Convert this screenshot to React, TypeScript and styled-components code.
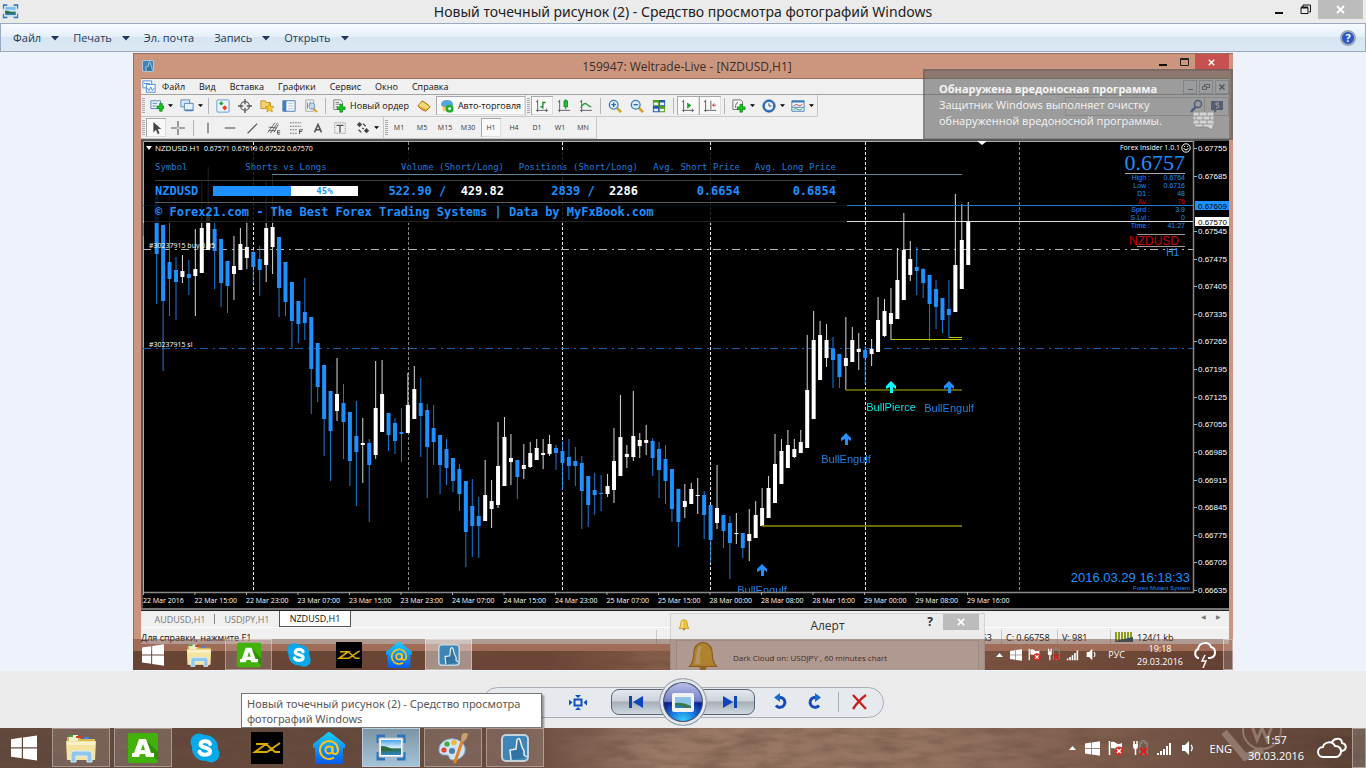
import React from 'react';
import styled, { createGlobalStyle, css } from 'styled-components';

const GlobalStyle = createGlobalStyle`
  * { box-sizing: border-box; }
  body { margin: 0; background: #eef3fa; font-family: "Open Sans", "Noto Sans", sans-serif; }
  button { font: inherit; color: inherit; border: 0; padding: 0; margin: 0; background: none; }
  svg { display: block; flex: none; }
`;

/* ---------- icons ---------- */

type IconProps = { size?: number };

const WinLogo = ({ size = 26 }: IconProps) => (
  <svg width={size} height={size} viewBox="0 0 26 26" fill="#fff">
    <path d="M0 4.2 10.8 2.6V12.3H0zM12 2.4 26 .4V12.3H12zM0 13.6H10.8V23.3L0 21.8zM12 13.6H26V25.6L12 23.5z" />
  </svg>
);

const FolderIcon = ({ size = 32 }: IconProps) => (
  <svg width={size} height={size} viewBox="0 0 32 32">
    <path d="M2 5h12l2 2h14v21H2z" fill="#d9b85a" />
    <path d="M4 3h9v6H4z" fill="#e9f3d0" />
    <path d="M4 3h4v2H4z" fill="#2fa62f" /><path d="M11 4h5v2h-5z" fill="#d8372a" /><path d="M19 5h5v2h-5z" fill="#3f86d6" />
    <path d="M1 9h30l-1 19H2z" fill="#f5e3a0" />
    <path d="M2 10h28v3H2z" fill="#fbf1c8" />
    <path d="M6 30v-8q0-3 3-3h15q3 0 3 3v8h-5v-6H11v6z" fill="#8fc6ea" stroke="#d9effb" />
  </svg>
);

const AIcon = ({ size = 32 }: IconProps) => (
  <svg width={size} height={size} viewBox="0 0 32 32">
    <rect x="1" y="1" width="30" height="30" rx="2" fill="#43b10c" />
    <path d="M26 24 31 29V20L19 8z" fill="#2f8f06" />
    <path fillRule="evenodd" d="M12 7h7l5 14h3v4h-8l-1-3h-5l-1 3H5v-4h2zM16 12l-2 6h4z" fill="#fff" />
  </svg>
);

const SkypeIcon = ({ size = 32 }: IconProps) => (
  <svg width={size} height={size} viewBox="0 0 32 32">
    <circle cx="16" cy="16" r="13" fill="#07a9ea" /><circle cx="10" cy="10" r="8.5" fill="#07a9ea" /><circle cx="22" cy="22" r="8.5" fill="#07a9ea" />
    <path d="M21 12C20 8.5 11.500 8 11.500 12.200c0 4.300 9.500 2.600 9.500 7 0 4.500-9 4.500-10.500.5" fill="none" stroke="#fff" strokeWidth="4" strokeLinecap="round" />
  </svg>
);

const ZxIcon = ({ size = 32 }: IconProps) => (
  <svg width={size} height={size} viewBox="0 0 32 32">
    <path d="M0 0h32v32H0z" fill="#000" />
    <path d="M5 12h10L4 20h12l13-9M15 12l9 8h5" fill="none" stroke="#d9a900" strokeWidth="2" />
  </svg>
);

const MailIcon = ({ size = 32 }: IconProps) => (
  <svg width={size} height={size} viewBox="0 0 32 32">
    <defs><linearGradient id="house" x2="0" y2="1"><stop stopColor="#16d0ff" /><stop offset="1" stopColor="#0a5be8" /></linearGradient></defs>
    <path d="M14 1q2-2 4 0l14 11v4h-2v14q0 2-2 2H4q-2 0-2-2V16H0v-4z" fill="url(#house)" />
    <circle cx="16" cy="18" r="3.500" fill="none" stroke="#ffc21a" strokeWidth="2" />
    <path d="M19.500 14v5.500q0 2.500 2.500 2.500c2.500 0 3-2 3-4a9 9 0 1 0-4 7.500" fill="none" stroke="#ffc21a" strokeWidth="2" />
  </svg>
);

const MtIcon = ({ size = 28 }: IconProps) => (
  <svg width={size} height={size} viewBox="0 0 28 28">
    <rect x="1" y="1" width="26" height="26" rx="4" fill="#3f86b8" stroke="#c3d2dc" strokeWidth="2" />
    <path d="M10 26 9 16l6-1 1-9q2-3 3 0l2 7 2 4v4l3 2" fill="#3273a3" stroke="#e8eef2" strokeWidth="1.500" />
  </svg>
);

const PhotoIcon = ({ size = 32 }: IconProps) => (
  <svg width={size} height={size} viewBox="0 0 32 32">
    <defs><linearGradient id="sky" x2="0" y2="1"><stop stopColor="#4aa4ea" /><stop offset=".5" stopColor="#d8eefa" /><stop offset=".6" stopColor="#2b6f4e" /><stop offset="1" stopColor="#2b86c6" /></linearGradient></defs>
    <path d="M3 11V4h7M22 4h7v7M29 20v7h-7M10 27H3v-7" fill="none" stroke="#2d74b8" strokeWidth="3" />
    <path d="M4 6h24v19H4z" fill="#fff" stroke="#a9bccb" /><path d="M6 8h20v15H6z" fill="url(#sky)" /><path d="M6 14q8 0 13 5H6z" fill="#2f6a3f" />
  </svg>
);

const PaintIcon = ({ size = 32 }: IconProps) => (
  <svg width={size} height={size} viewBox="0 0 32 32">
    <path d="M2 18C2 10 10 6 17 7s12 6 11 12-7 9-12 9-3-5-6-5-8 0-8-5z" fill="#cfe4f3" stroke="#8fb0cc" />
    <circle cx="7" cy="18" r="2.600" fill="#e04234" /><circle cx="10" cy="12" r="2.600" fill="#43a84a" /><circle cx="17" cy="10.500" r="2.600" fill="#f3b62c" /><circle cx="15" cy="19" r="3" fill="#4d7ea8" />
    <path d="M26 7 18 30" stroke="#e0812b" strokeWidth="3" strokeLinecap="round" /><path d="M24 8 25 2q4-2 6 0-1 6-5 8z" fill="#c9a070" />
  </svg>
);

const FlagIcon = ({ size = 16 }: IconProps) => (
  <svg width={size} height={size} viewBox="0 0 16 16">
    <path d="M1.500 1v14" stroke="#fff" strokeWidth="1.500" /><path d="M3 2q3-1 5 1t6 0v6q-4 1-6 0T3 8z" fill="#fff" />
    <circle cx="11" cy="11" r="4.500" fill="#dc2a20" /><path d="m9 9 4 4m0-4-4 4" stroke="#fff" strokeWidth="1.500" />
  </svg>
);

const PowerIcon = ({ size = 16 }: IconProps) => (
  <svg width={size} height={size} viewBox="0 0 16 16" fill="none">
    <path d="M2 1v3M5 1v3M3.500 9v6" stroke="#fff" strokeWidth="1.500" /><path d="M1 4h5v3L5 9H2L1 7z" fill="#fff" />
    <path d="M8 14V3h2V1h3v2h2v11z" stroke="#8b8280" strokeWidth="1.500" /><path d="m8 8 7 7m0-7-7 7" stroke="#e01b1b" strokeWidth="2" />
  </svg>
);

const SignalIcon = ({ size = 16 }: IconProps) => (
  <svg width={size} height={size} viewBox="0 0 16 16" fill="#fff">
    <path d="M1 13h2v2H1zM4 11h2v4H4zM7 9h2v6H7zM10 6h2v9h-2zM13 3h2v12h-2z" />
  </svg>
);

const SoundIcon = ({ size = 16 }: IconProps) => (
  <svg width={size} height={size} viewBox="0 0 16 16">
    <path d="M2 5h3l4-4v14l-4-4H2z" fill="#fff" /><path d="M11 5q2.500 3 0 6" fill="none" stroke="#fff" strokeWidth="1.300" />
  </svg>
);

const CaretUp = () => (
  <svg width="9" height="6" viewBox="0 0 9 6"><path d="M4.500 1 8 5H1z" fill="#fff" /></svg>
);

const CaretDown = ({ color = '#000', size = 5 }: { color?: string; size?: number }) => (
  <svg width={size} height={size} viewBox="0 0 8 8"><path d="M0 2h8L4 6.500z" fill={color} /></svg>
);

const CloudIcon = () => (
  <svg width="32" height="24" viewBox="0 0 32 24" fill="none" stroke="#fff" strokeWidth="2">
    <path d="M7 21a5 5 0 0 1 0-10c1-5 9-7 12-1 5 0 6 3 6 5.500S23 21 20 21z" /><path d="M16 6c3-5 10-4 10 1 5 1 5 7 0 8" />
  </svg>
);

const StormIcon = () => (
  <svg width="26" height="28" viewBox="0 0 26 28" fill="none" stroke="#fff" strokeWidth="2">
    <path d="M8 17H7a5 5 0 0 1 0-9c1-7 11-8 13-2 5 1 6 10-1 11h-2" /><path d="m14 14-3 6h4l-3 7" strokeWidth="1.500" />
  </svg>
);

const BellIcon = ({ size = 12 }: IconProps) => (
  <svg width={size} height={size} viewBox="0 0 24 24">
    <path d="M12 1q7 1 7 9 0 6 3 9H2q3-3 3-9 0-8 7-9z" fill="#f0c22c" stroke="#a97b14" /><path d="M9 4q-2 3-2 9l-1 4h4q-1-7 1-13z" fill="#fbe79a" /><path d="M9 19h6q-1 4-3 4t-3-4z" fill="#b5821a" />
  </svg>
);

const glyphs: Record<string, React.ReactNode> = {
  chartNew: <><path d="M1 2h11v9H1z" fill="#e6f1fb" stroke="#4b7fb4" /><path d="M3 5h5M3 8h4" stroke="#4b7fb4" /><path d="M8 8h3V5h3v3h3v3h-3v3h-3v-3H8z" fill="#12c41e" stroke="#067a0c" strokeWidth=".7" /></>,
  profiles: <><path d="M1 1h10v8H1z" fill="#dbeaf8" stroke="#4b7fb4" /><path d="M5 5h10v8H5z" fill="#e6f1fb" stroke="#4b7fb4" /><path d="M6 12h9v2H6z" fill="#4b7fb4" /></>,
  charts: <><path d="M1 1h10v8H1z" fill="#fff" stroke="#3b84e0" /><path d="M5 5h10v9H5z" fill="#fff" stroke="#3b84e0" /><path d="m6 9 2 3 2-4 2 4 2-3M2 4h7" stroke="#3b84e0" fill="none" /></>,
  market: <><rect x="1" y="1" width="14" height="14" rx="1" fill="#e9f3fc" stroke="#5d95cc" /><path d="m6 3 2 2-2 2-2-2z" fill="#1fa33b" stroke="#1fa33b" /><path d="m10 7 3 3-3 3-3-3z" fill="#d74a2a" /></>,
  cross: <><circle cx="8" cy="8" r="5" fill="none" stroke="#666" strokeWidth="1.500" /><path d="M8 0v6M8 10v6M0 8h6M10 8h6" stroke="#555" strokeWidth="1.500" /></>,
  favorites: <><path d="M1 2h5l1 2h5v7H1z" fill="#f3d36a" stroke="#b98f26" /><path d="m11 5 1.500 3.500 3.500.3-2.600 2.300.8 3.700L11 13l-3.200 1.800.8-3.700L6 8.800l3.500-.3z" fill="#ffc928" stroke="#b98316" strokeWidth=".7" /></>,
  terminal: <><path d="M1 2h14v12H1z" fill="#f5faff" stroke="#3d6fae" /><path d="M1 2h4v12H1z" fill="#3f7dc4" /><path d="M7 5h6M7 8h6M7 11h6" stroke="#b6c6d8" /></>,
  tester: <><path d="M2 1h9v13H2z" fill="#f4f4f4" stroke="#a0a0a0" /><path d="M4 4v7M7 3v6M9 5v7" stroke="#5a8ab9" /><circle cx="9" cy="8" r="3.500" fill="#c9e2f6aa" stroke="#6793bd" /><path d="m11 11 4 4" stroke="#d09a2e" strokeWidth="2" /></>,
  order: <><path d="M2 1h8l2 3v8H2z" fill="#f4f4f4" stroke="#777" /><path d="M4 4h4M4 6h6M4 9h3" stroke="#777" /><path d="M6 9h3V6h3v3h3v3h-3v3H9v-3H6z" fill="#12c41e" stroke="#067a0c" strokeWidth=".7" /></>,
  gold: <><path d="M1 8 6 2q7 4 9 7l-5 5Q5 13 1 8z" fill="#e8b030" stroke="#99681a" /><path d="m2 7 4-4q5 3 8 6l-3 2Q6 10 2 7z" fill="#f7d978" /></>,
  auto: <><path d="M1 7q0-6 7-6t7 6l-5 3H5z" fill="#56a5dc" /><path d="M2 8q5 3 12 0l-2 6H4z" fill="#f0cd58" /><circle cx="11" cy="11" r="4.500" fill="#20ae2c" /><circle cx="11" cy="11" r="1.700" fill="#fff" /></>,
  bars: <><path d="M3 1v14M1 13h14M1 3h2M13 11v4" stroke="#555" fill="none" /><path d="M9 3v8M9 4h3M6 9h3" stroke="#138a25" fill="none" strokeWidth="1.500" /></>,
  candle: <><path d="M3 1v14M1 13h14M1 3h2" stroke="#555" fill="none" /><path d="M10 0v12" stroke="#138a25" /><path d="M8 2h4v7H8z" fill="#19c12d" stroke="#138a25" /></>,
  line: <><path d="M3 1v14M1 13h14M1 3h2" stroke="#555" fill="none" /><path d="M2 10q4-7 7-4t5 3" stroke="#2f9d3d" fill="none" strokeWidth="1.500" /></>,
  zoomIn: <><path d="m10 10 5 5" stroke="#d3a032" strokeWidth="3" /><circle cx="6.500" cy="6.500" r="5" fill="#d9edfb" stroke="#3f7cb8" strokeWidth="1.500" /><path d="M4 6.500h5M6.500 4v5" stroke="#2a69a8" strokeWidth="1.500" /></>,
  zoomOut: <><path d="m10 10 5 5" stroke="#d3a032" strokeWidth="3" /><circle cx="6.500" cy="6.500" r="5" fill="#d9edfb" stroke="#3f7cb8" strokeWidth="1.500" /><path d="M4 6.500h5" stroke="#2a69a8" strokeWidth="1.500" /></>,
  tile: <><path d="M1 1h7v7H1zM8 8h7v7H8z" fill="#4c9d18" /><path d="M8 1h7v7H8zM1 8h7v7H1z" fill="#2556a8" /><path d="M2 4h5v3H2zM9 4h5v3H9zM2 11h5v3H2zM9 11h5v3H9z" fill="#e8f1f8" /></>,
  scroll: <><path d="M3 1v14M1 13h14M1 3h2M13 11v4" stroke="#555" fill="none" /><path d="m7 4 5 3.500L7 11z" fill="#19a52d" /></>,
  shift: <><path d="M3 1v14M1 13h14M1 3h2M9 2v10" stroke="#555" fill="none" /><path d="M15 7h-4m2-2-2 2 2 2" stroke="#b3371f" fill="none" /></>,
  indicator: <><path d="M1 3V1h9l2 2v9H1z" fill="#f6f6f6" stroke="#666" /><path d="M4 10q0-6 3-6" stroke="#555" fill="none" /><path d="M6 9h3V6h3v3h3v3h-3v3H9v-3H6z" fill="#12c41e" stroke="#067a0c" strokeWidth=".7" /></>,
  clock: <><circle cx="8" cy="8" r="7" fill="#2f74c4" stroke="#194f90" /><circle cx="8" cy="8" r="4.700" fill="#e9f4fd" /><path d="M8 5v3h3" stroke="#333" fill="none" /></>,
  template: <><path d="M1 2h14v12H1z" fill="#f2f8fd" stroke="#3b78ba" /><path d="M1 2h14v2H1z" fill="#3b78ba" /><path d="M3 8q3-3 5-1t5-1" stroke="#b4452d" fill="none" /><path d="M1 9.500h14" stroke="#3b78ba" /><path d="M3 12q3-2 5 0t5-1" stroke="#2d9441" fill="none" /></>,
  pointer: <path d="M5 1v12l3-3 2 5 2-1-2-5h4z" fill="#444" />,
  plus: <path d="M8 0v7M8 9v7M0 8h7M9 8h7" stroke="#555" strokeWidth="1.300" />,
  vline: <path d="M8 2v12" stroke="#555" strokeWidth="1.300" />,
  hline: <path d="M2 8h12" stroke="#555" strokeWidth="1.300" />,
  trend: <path d="M3 14 14 3" stroke="#555" strokeWidth="1.300" />,
  channel: <path d="M1 13 9 2M4 14l8-12M2 7l9 1M2 11h8M8 13l5-9M12 11h3M12 13h3M12 15h3M12 11v4" stroke="#555" fill="none" />,
  fibo: <><path d="M1 2h13M1 6h13M1 10h9M1 14h9" stroke="#666" strokeDasharray="2 1" /><path d="M12 15v-5h4M12 12h3" stroke="#444" fill="none" /></>,
  textA: <path d="M4 13 8 4l4 9M5.500 10h5" stroke="#555" fill="none" strokeWidth="1.800" />,
  textT: <><path d="M2 2h12v12H2z" fill="none" stroke="#777" strokeDasharray="1 1" /><path d="M4 5h8M8 5v8" stroke="#555" strokeWidth="1.500" /></>,
  arrows: <><path d="m4 1 3 3-3 3-3-3z" fill="#444" /><path d="m12 8 3 3-3 3-3-3z" fill="#444" /><path d="M3 10l3 3M8 3l3 3M7 8l2 1" stroke="#444" strokeWidth="1.500" /></>,
};

const Glyph = ({ name }: { name: string }) => (
  <svg width="14" height="14" viewBox="0 0 16 16">{glyphs[name]}</svg>
);

/* ---------- page frame ---------- */

const Page = styled.div`
  min-height: 100vh;
  display: flex;
  flex-direction: column;
  overflow: hidden;
`;

const TitleBar = styled.header`
  height: 23px;
  flex: none;
  display: grid;
  grid-template-columns: 137px 1fr 137px;
  align-items: center;
  background: #ebebeb;
`;
const TitleIcon = styled.span` padding-left: 2px; `;
const Title = styled.h1`
  margin: 0;
  text-align: center;
  font-family: "Noto Sans", "Open Sans", sans-serif;
  font-size: 14px;
  line-height: 22px;
  font-weight: 400;
  color: #222;
  white-space: nowrap;
`;
const WindowButtons = styled.div`
  display: flex;
  justify-content: flex-end;
  align-self: start;
  padding-right: 3px;
`;
const WindowButton = styled.button<{ $close?: boolean }>`
  width: ${p => (p.$close ? 45 : 26)}px;
  height: 19px;
  display: grid;
  place-items: center;
  background: ${p => (p.$close ? '#bcbcbc' : 'transparent')};
`;

const MenuBar = styled.nav`
  height: 29px;
  flex: none;
  display: flex;
  align-items: center;
  gap: 14px;
  padding: 0 9px 0 12px;
  border: 1px solid #98aac0;
  background: linear-gradient(#f7fbff, #e5eff9 48%, #d7e5f2 50%, #dce8f4);
  font-size: 11px;
  color: #1e395b;
`;
const MenuItem = styled.button`
  display: flex;
  align-items: center;
  gap: 10px;
`;
const PlainMenuItem = styled(MenuItem)` margin-right: 6px; `;
const HelpButton = styled.button`
  margin-left: auto;
  width: 16px;
  height: 16px;
  border-radius: 50%;
  border: 2px solid #9ba9bb;
  background: #2b57c4;
  color: #fff;
  font-size: 11px;
  line-height: 12px;
  font-weight: 700;
`;

const Viewer = styled.main`
  flex: 1;
  padding: 1px 133px;
  background: #eef3fb;
`;

/* ---------- wallpaper ---------- */

const WoodSvg = styled.svg`
  position: absolute;
  inset: 0;
  width: 100%;
  height: 100%;
  z-index: -1;
`;
const Wood = ({ id }: { id: string }) => (
  <WoodSvg aria-hidden="true">
    <filter id={id}>
      <feTurbulence type="fractalNoise" baseFrequency=".03 .12" numOctaves="5" seed="8" />
      <feColorMatrix values="0 0 0 0 .15  0 0 0 0 .08  0 0 0 0 .05  2 0 0 0 -.7" />
    </filter>
    <rect width="100%" height="100%" filter={`url(#${id})`} opacity=".55" />
  </WoodSvg>
);
const wood = css`
  position: relative;
  isolation: isolate;
  background: linear-gradient(90deg, #5f463b, #67493d 38%, #9a7a67 48%, #957562 68%, #7c5b4b 82%, #573d33);
`;

/* ---------- photographed desktop ---------- */

const Photo = styled.section`
  ${wood}
  min-height: 617px;
  height: 100%;
  overflow: hidden;
`;
const Terminal = styled.div`
  background: #cc967e;
  border: 1px solid #96705f;
  border-width: 1px 0 0 1px;
  padding: 0 4px 7px 7px;
`;
const TerminalTitle = styled.div`
  height: 24px;
  display: grid;
  grid-template-columns: 80px 1fr 76px;
  align-items: center;
  text-align: center;
  font-size: 12px;
  color: #3b2d27;
  > :first-child { padding-left: 1px; }
`;
const TerminalButtons = styled.div`
  display: flex;
  justify-content: flex-end;
  align-self: start;
`;
const TerminalButton = styled.button<{ $close?: boolean }>`
  width: ${p => (p.$close ? 36 : 22)}px;
  height: 16px;
  display: grid;
  place-items: center;
  background: ${p => (p.$close ? '#c75050' : 'transparent')};
`;
const TerminalMenu = styled.nav`
  height: 17px;
  display: flex;
  align-items: center;
  gap: 14px;
  padding-left: 1px;
  background: #f0f0f0;
  border-top: 1px solid #96705f;
  border-bottom: 1px solid #a3a3a3;
  font-size: 9px;
  color: #111;
`;
const FirstMenuItem = styled(MenuItem)` margin-left: -8px; `;
const MdiButtons = styled.div`
  margin-left: auto;
  display: flex;
  gap: 2px;
`;
const MdiButton = styled.button`
  width: 14px;
  height: 14px;
  border: 1px solid #a9b8c6;
  display: grid;
  place-items: center;
`;
const ToolRow = styled.div`
  height: 22px;
  display: flex;
  align-items: center;
  background: #f0f0f0;
`;
const ToolGroup = styled.div`
  height: 22px;
  display: flex;
  align-items: center;
  border: 1px solid #c9c9c9;
  border-width: 0 1px 1px 0;
  font-size: 9px;
  color: #111;
`;
const Grip = styled.span`
  width: 3px;
  height: 15px;
  margin: 0 1px;
  background: repeating-linear-gradient(#aaa 0 1px, #f0f0f0 1px 2px);
`;
const Divider = styled.span`
  width: 1px;
  height: 16px;
  margin: 0 3px;
  background: #b5b5b5;
`;
const Tool = styled.button<{ $w?: number; $on?: boolean }>`
  width: ${p => p.$w ?? 22}px;
  height: 19px;
  display: flex;
  align-items: center;
  justify-content: center;
  gap: 4px;
  white-space: nowrap;
  ${p => p.$on && css`background: #f9f9f9; box-shadow: inset 1px 1px #a9a9a9, inset -1px -1px #ddd;`}
`;
const Period = styled(Tool)`
  width: 20px;
  margin-right: 3px;
  font-size: 7px;
  color: #333;
`;
const SearchBox = styled.div`
  margin-left: auto;
  width: 164px;
  height: 19px;
  display: flex;
  align-items: center;
  border: 1px solid #bbb;
  input { flex: 1; min-width: 0; height: 15px; border: 0; background: none; }
`;
const ChatBadge = styled.span`
  width: 24px;
  height: 18px;
  border-left: 1px solid #bbb;
  display: grid;
  place-items: center;
`;

/* ---------- chart ---------- */

const ChartArea = styled.div`
  position: relative;
  background: #000;
`;
const ChartSvg = styled.svg`
  width: 100%;
  height: auto;
`;
const Sentiment = styled.div`
  position: absolute;
  left: 3px;
  top: 12px;
  width: 703px;
  height: 72px;
  padding-left: 11px;
  background: rgba(0, 0, 0, .85);
  color: #1e90ff;
  font-family: "DejaVu Sans Mono", monospace;
  font-size: 12px;
  font-weight: 700;
`;
const SentimentTable = styled.table`
  width: 681px;
  table-layout: fixed;
  border-collapse: collapse;
  text-align: right;
  white-space: pre;
  th { height: 29px; padding: 3px 0 0; font-size: 9px; font-weight: 400; color: #1c7cdb; border-bottom: 1px solid #3c3c3c; }
  td { height: 22px; padding: 0; border-bottom: 1px solid #5a5a5a; }
  th:first-child, td:first-child { text-align: left; }
  th:nth-child(2) { text-align: center; }
  b { color: #fff; }
`;
const Ratio = styled.div`
  width: 145px;
  height: 10px;
  display: flex;
  font-size: 9px;
  line-height: 11px;
  background: #fff;
  color: #1e90ff;
  &::before { content: ""; width: 78px; background: #1e90ff; }
  span { flex: 1; text-align: center; }
`;
const Credit = styled.p`
  margin: 0;
  line-height: 19px;
  white-space: nowrap;
`;
const Insider = styled.aside`
  position: absolute;
  right: 44px;
  top: 4px;
  width: 80px;
  text-align: right;
  color: #1e90ff;
  font-family: "Liberation Sans", Arial, sans-serif;
`;
const InsiderName = styled.div`
  height: 10px;
  margin-right: -6px;
  display: flex;
  align-items: center;
  justify-content: flex-end;
  gap: 1px;
  white-space: nowrap;
  font: 7px/10px "Open Sans", sans-serif;
  color: #fff;
`;
const InsiderPrice = styled.div`
  height: 20px;
  font: 22px/20px "Liberation Serif", serif;
`;
const InsiderTable = styled.table`
  width: 60px;
  margin-left: 20px;
  border-collapse: collapse;
  border-top: 1px solid #aaa;
  font-size: 7px;
  line-height: 8px;
  th, td { padding: 0; height: 8px; font-weight: 400; text-align: right; white-space: nowrap; }
  th { width: 25px; }
  .alarm { color: #d00000; }
`;
const InsiderSymbol = styled.div`
  margin: 4px 0 0 32px;
  height: 13px;
  display: flex;
  justify-content: flex-end;
  padding-right: 6px;
  border: 1px solid #999;
  border-width: 1px 0;
  font-size: 12px;
  line-height: 12px;
  color: #c80000;
`;
const InsiderFrame = styled.div`
  padding-right: 6px;
  font-size: 10px;
  line-height: 11px;
`;

const W = true, B = false;
type Candle = [number, number, number, number, boolean];
/* high, low, body top, body bottom, rising */
const candles: Candle[] = [
  [195, 304, 195, 254, B], [225, 371, 225, 301, B], [196, 316, 262, 279, B], [257, 320, 270, 282, B], [255, 283, 271, 277, W],
  [260, 295, 274, 278, B], [229, 316, 269, 276, W], [182, 273, 228, 273, W], [167, 250, 213, 250, W], [205, 289, 229, 251, B],
  [239, 307, 239, 283, B], [261, 313, 261, 286, B], [236, 300, 266, 274, W], [228, 270, 244, 270, W], [213, 269, 247, 258, W],
  [250, 284, 252, 267, B], [246, 296, 259, 270, B], [181, 282, 228, 265, W], [174, 274, 227, 247, W], [237, 317, 237, 288, B],
  [262, 316, 262, 302, B], [282, 349, 282, 321, B], [301, 343, 301, 324, B], [278, 340, 312, 323, B], [317, 414, 317, 369, B],
  [343, 402, 343, 387, B], [365, 456, 365, 419, B], [391, 481, 391, 431, B], [358, 421, 394, 411, W], [384, 459, 403, 422, B],
  [412, 486, 412, 461, B], [401, 506, 436, 452, B], [418, 483, 443, 445, W], [439, 522, 443, 465, B], [361, 459, 408, 455, W],
  [360, 432, 394, 432, W], [413, 451, 413, 435, B], [418, 454, 423, 441, B], [408, 462, 432, 434, B], [373, 433, 405, 433, W],
  [366, 419, 389, 419, W], [378, 457, 403, 416, B], [404, 498, 410, 447, B], [405, 465, 428, 442, B], [435, 494, 435, 465, B],
  [439, 485, 449, 468, B], [458, 492, 458, 481, B], [464, 511, 469, 494, B], [481, 567, 481, 532, B], [479, 557, 506, 526, B],
  [497, 558, 516, 526, B], [460, 521, 495, 521, W], [480, 528, 501, 509, W], [422, 508, 466, 505, W], [417, 486, 437, 486, W],
  [434, 485, 458, 462, W], [460, 499, 460, 477, B], [444, 479, 465, 469, W], [442, 468, 453, 467, W], [439, 460, 448, 460, W],
  [439, 469, 453, 455, W], [435, 456, 444, 454, W], [445, 470, 448, 453, B], [441, 490, 451, 463, B], [439, 480, 457, 466, B],
  [447, 486, 461, 466, B], [456, 529, 463, 491, B], [476, 527, 476, 505, B], [473, 515, 490, 495, B], [475, 511, 493, 494, B],
  [474, 497, 486, 494, W], [428, 503, 461, 490, W], [395, 476, 437, 476, W], [445, 468, 454, 457, W], [391, 461, 436, 457, W],
  [433, 458, 440, 446, W], [425, 455, 440, 443, W], [438, 476, 441, 458, B], [442, 498, 449, 470, B], [445, 504, 459, 481, B],
  [469, 522, 469, 509, B], [489, 547, 489, 522, B], [484, 518, 501, 507, W], [483, 504, 489, 504, W], [478, 514, 495, 496, W],
  [491, 539, 495, 515, B], [505, 563, 505, 540, B], [465, 529, 508, 523, W], [515, 548, 515, 531, B], [516, 579, 523, 543, B],
  [513, 544, 533, 534, W], [533, 558, 533, 548, B], [509, 561, 534, 541, W], [501, 538, 515, 538, W], [488, 526, 508, 526, W],
  [476, 518, 488, 518, W], [434, 503, 464, 503, W], [439, 484, 451, 484, W], [430, 468, 445, 468, W], [439, 458, 449, 457, W],
  [430, 453, 442, 453, W], [335, 448, 390, 448, W], [311, 419, 340, 419, W], [321, 380, 335, 380, W], [324, 367, 340, 358, W],
  [337, 388, 349, 360, B], [354, 388, 354, 377, B], [317, 390, 358, 366, W], [327, 362, 340, 362, W], [333, 370, 349, 352, W],
  [346, 384, 350, 358, B], [339, 366, 349, 354, W], [297, 352, 320, 352, W], [299, 337, 311, 336, W], [288, 340, 313, 324, W],
  [248, 319, 280, 319, W], [213, 300, 250, 300, W], [241, 281, 259, 275, W], [247, 295, 267, 271, B], [268, 298, 269, 283, B],
  [275, 341, 275, 304, B], [280, 329, 289, 307, B], [298, 333, 298, 320, B], [280, 338, 309, 315, B], [194, 312, 265, 312, W],
  [204, 289, 240, 289, W], [202, 265, 221, 265, W],
];
const prices = ['0.67755', '0.67685', '', '0.67545', '0.67475', '0.67405', '0.67335', '0.67265', '0.67195', '0.67125', '0.67055', '0.66985', '0.66915', '0.66845', '0.66775', '0.66705', '0.66635'];
const dates = ['22 Mar 2016', '22 Mar 15:00', '22 Mar 23:00', '23 Mar 07:00', '23 Mar 15:00', '23 Mar 23:00', '24 Mar 07:00', '24 Mar 15:00', '24 Mar 23:00', '25 Mar 07:00', '25 Mar 15:00', '28 Mar 00:00', '28 Mar 08:00', '28 Mar 16:00', '29 Mar 00:00', '29 Mar 08:00', '29 Mar 16:00'];
const signals: [number, number, string, string][] = [
  [762, 569, 'BullEngulf', '#1e90ff'], [846, 438, 'BullEngulf', '#1e90ff'], [891, 386, 'BullPierce', '#00ffff'], [949, 386, 'BullEngulf', '#1e90ff'],
];

const AxisText = styled.text`
  font: 7px "Open Sans", sans-serif;
  fill: #fff;
`;
const PriceText = styled(AxisText)<{ $dark?: boolean }>`
  font-family: "Liberation Sans", sans-serif;
  font-size: 8px;
  fill: ${p => (p.$dark ? '#000' : '#fff')};
`;
const CaptionText = styled(AxisText)` font-size: 8px; `;
const SignalText = styled.text` font: 11px "Liberation Sans", sans-serif; text-anchor: middle; `;
const StampText = styled.text<{ $size: number }>`
  font: ${p => p.$size}px "Liberation Sans", sans-serif;
  text-anchor: end;
  fill: #1e90ff;
`;

const CandleChart = () => (
  <ChartSvg viewBox="141 139 1088 471" role="img" aria-label="NZDUSD H1">
    <defs><clipPath id="plot"><rect x="143" y="141" width="1051" height="451" /></clipPath></defs>
    <path d="M141 139h1088v2H143v469h-2z" fill="#555" />
    <path d="M143.500 592V141.500H1193.500" stroke="#aaa" fill="none" />
    <g clipPath="url(#plot)">
      {[253, 408, 562, 710, 865, 1019].map((x, i) => (
        <path key={x} d={`M${x + .5} 142V592`} stroke={i === 1 || i === 5 ? '#888' : '#eee'} strokeDasharray="3 2" />
      ))}
      <path d="M143 249.500H1194" stroke="#b4b4b4" strokeDasharray="8 5 2 4" />
      <path d="M143 348.500H1194" stroke="#1560ae" strokeDasharray="8 5 2 4" />
      <path d="M143 223h1v13h-1z" fill="#1e90ff" />
      {candles.map(([hi, lo, top, bottom, up], i) => {
        const x = 156.67 + i * 6.441;
        return (
          <g key={i} fill={up ? '#fff' : '#1e90ff'}>
            <rect x={x - .5} y={hi} width="1" height={lo - hi} opacity=".85" />
            <rect x={x - 2} y={top} width="4" height={bottom - top} />
          </g>
        );
      })}
      <path d="M143 205.500H1194" stroke="#1e78d0" />
      <path d="M143 221.500H1194" stroke="#ddd" />
      <path d="M762 526H962" stroke="#8c8c00" strokeWidth="1.500" /><path d="M846 390H962" stroke="#7a7a00" strokeWidth="1.500" />
      <path d="M891 339.500H962M949 337.500H962" stroke="#c4c400" />
      {signals.map(([x, y, name, color]) => (
        <g key={`${x}`} fill={color}>
          <path d={`M${x} ${y - 5}l5 5v3l-3-2v6h-3v-6l-4 2v-3z`} />
          <SignalText x={x} y={y + (x === 949 ? 26 : 25)} opacity=".9">{name}</SignalText>
        </g>
      ))}
    </g>
    <path d="M982 145l-5-4h10z" fill="#fff" />
    <path d="M1193.500 141V592.500H143" stroke="#888" fill="none" strokeWidth="1.500" />
    <path d="M146 146h6l-3 4z" fill="#fff" />
    <CaptionText x="155" y="151">NZDUSD,H1</CaptionText>
    <AxisText x="204" y="151">0.67571 0.67619 0.67522 0.67570</AxisText>
    <AxisText x="149" y="248">#30237915 buy 0.05</AxisText>
    <AxisText x="149" y="347">#30237915 sl</AxisText>
    {prices.map((p, k) => p && (
      <g key={p}>
        <path d={`M1194 ${148 + Math.round(k * 27.63)}.5h3`} stroke="#aaa" />
        <PriceText x="1198" y={151 + Math.round(k * 27.63)}>{p}</PriceText>
      </g>
    ))}
    <path d="M1195 201h34v9h-34z" fill="#1e90ff" /><PriceText $dark x="1198" y="209">0.67609</PriceText>
    <path d="M1195 217h34v9h-34z" fill="#fff" /><PriceText $dark x="1198" y="225">0.67570</PriceText>
    {dates.map((d, k) => (
      <g key={d}>
        <path d={`M${143.500 + k * 51.5} 592v3`} stroke="#aaa" />
        <AxisText x={143 + k * 51.5} y="603">{d}</AxisText>
      </g>
    ))}
    <StampText $size={13} x="1190" y="582">2016.03.29 16:18:33</StampText>
    <StampText $size={6} x="1190" y="590">Forex Mutant System</StampText>
    <path d="M141 608h1088v2H141z" fill="#777" />
  </ChartSvg>
);

const TopLine = styled.div`
  position: absolute;
  left: 131px;
  right: 267px;
  top: 35px;
  height: 1px;
  background: #64869a;
`;

/* ---------- terminal footer ---------- */

const Tabs = styled.div`
  height: 17px;
  display: flex;
  background: #f0f0f0;
  border-top: 1px solid #222;
  font-size: 9px;
  color: #777;
`;
const Tab = styled.button<{ $active?: boolean; $last?: boolean }>`
  width: ${p => (p.$active ? 72 : p.$last ? 64 : 74)}px;
  height: 16px;
  padding-left: ${p => (p.$active || p.$last ? 0 : 4)}px;
  color: ${p => (p.$active ? '#111' : '#777')};
  background: ${p => (p.$active ? '#fff' : p.$last ? 'none' : 'linear-gradient(#888, #888) 100% 50% / 1px 10px no-repeat')};
  border: ${p => (p.$active ? '1px solid #555' : '0 solid')};
  border-top: 0;
  line-height: 15px;
`;
const TabScroll = styled.span`
  margin-left: auto;
  width: 28px;
  display: flex;
  gap: 10px;
  font-size: 6px;
  line-height: 13px;
`;
const Status = styled.div`
  height: 17px;
  display: flex;
  align-items: center;
  padding-top: 2px;
  background: #f0f0f0;
  border-top: 1px solid #fff;
  font-size: 9px;
  color: #111;
  white-space: nowrap;
`;
const StatusCell = styled.span<{ $w: number }>`
  width: ${p => p.$w}px;
  height: 14px;
  padding-left: 4px;
  display: flex;
  align-items: center;
  gap: 4px;
  border-left: 1px solid #c8c8c8;
`;
const QuoteCell = styled(StatusCell)`
  margin-left: auto;
  padding-right: 9px;
  justify-content: flex-end;
`;

/* ---------- overlays on the photo ---------- */

const Toast = styled.div`
  position: absolute;
  right: 0;
  top: 16px;
  width: 310px;
  height: 71px;
  padding: 10px 14px;
  border: 2px solid rgba(80, 80, 80, .3);
  background: rgba(100, 100, 100, .6);
  color: #f4f4f4;
  font-size: 11px;
  line-height: 16px;
  white-space: nowrap;
  b { display: block; }
`;
const ToastIcon = styled.svg`
  position: absolute;
  right: 17px;
  bottom: 8px;
`;
const Alert = styled.div`
  position: absolute;
  left: 537px;
  top: 560px;
  width: 315px;
  height: 58px;
  padding: 0 5px;
  background: #ebebeb;
  border: 1px solid #d3d3d3;
`;
const AlertTitle = styled.div`
  height: 26px;
  display: grid;
  grid-template-columns: 70px 1fr 70px;
  text-align: center;
  font-size: 12px;
  line-height: 24px;
  color: #333;
`;
const AlertIcon = styled.span` padding: 5px 2px; `;
const AlertButtons = styled.div`
  display: flex;
  justify-content: flex-end;
  font-weight: 700;
  line-height: 15px;
`;
const AlertClose = styled.button`
  width: 36px;
  height: 16px;
  margin-left: 10px;
  background: #bcbcbc;
  display: grid;
  place-items: center;
`;
const AlertBody = styled.div`
  display: flex;
  align-items: center;
  gap: 14px;
  height: 34px;
  padding-left: 10px;
  border: 1px solid #d0d0d0;
  background: #f0f0f0;
  font-size: 8px;
  color: #111;
`;
const InnerBar = styled.div`
  position: absolute;
  left: 0;
  right: 0;
  bottom: 0;
  height: 31px;
  display: flex;
  background: rgba(112, 66, 48, .5);
`;

/* ---------- task bars ---------- */

const TaskButton = styled.button<{ $state?: 'open' | 'active'; $small?: boolean }>`
  width: ${p => (p.$small ? 47 : 58)}px;
  margin-right: ${p => (p.$small ? 3 : 4)}px;
  height: ${p => (p.$small ? 31 : 39)}px;
  display: grid;
  place-items: center;
  ${p => p.$state && css`
    border: 1px solid rgba(255, 255, 255, .35);
    background: rgba(255, 255, 255, ${p.$state === 'active' ? .4 : .14});
  `}
`;
const PhotoTask = styled(TaskButton)`
  background: linear-gradient(#7d95a5, #a4c3d6);
  border-color: #b8d0df;
`;
const StartButton = styled.button<{ $small?: boolean }>`
  width: ${p => (p.$small ? 42 : 52)}px;
  padding-left: ${p => (p.$small ? 9 : 11)}px;
  display: flex;
  align-items: center;
`;
const Tray = styled.div<{ $small?: boolean }>`
  margin-left: auto;
  display: flex;
  align-items: center;
  gap: ${p => (p.$small ? 6 : 8)}px;
  color: #fff;
  font-size: ${p => (p.$small ? 9 : 11)}px;
`;
const Language = styled.span<{ $small?: boolean }>`
  margin: 0 4px 0 ${p => (p.$small ? 4 : 6)}px;
`;
const Clock = styled.time<{ $small?: boolean }>`
  width: ${p => (p.$small ? 50 : 64)}px;
  text-align: center;
  line-height: ${p => (p.$small ? 13 : 16)}px;
`;
const Weather = styled.span<{ $small?: boolean }>` margin-right: ${p => (p.$small ? 0 : -4)}px; `;
const ShowDesktop = styled.button<{ $small?: boolean }>`
  width: ${p => (p.$small ? 10 : 14)}px;
  align-self: stretch;
  border: 1px solid rgba(255, 255, 255, .4);
  background: rgba(255, 255, 255, .15);
`;
const TaskBar = styled.footer`
  ${wood}
  height: 40px;
  flex: none;
  display: flex;
  overflow: hidden;
`;
const Watermark = styled.svg`
  position: absolute;
  right: 7px;
  top: 0;
  z-index: -1;
`;

/* ---------- viewer controls ---------- */

const Controls = styled.div`
  position: relative;
  height: 57px;
  flex: none;
  display: flex;
  justify-content: center;
  align-items: center;
  padding-top: 5px;
  background: #ebebeb;
`;
const Pill = styled.div`
  width: 402px;
  height: 31px;
  padding-left: 83px;
  display: flex;
  align-items: center;
  border: 1px solid #a9aeb6;
  border-radius: 16px;
  background: #e6eaee;
`;
const ControlButton = styled.button<{ $gap?: number }>`
  width: 24px;
  height: 24px;
  margin-left: ${p => p.$gap ?? 0}px;
  display: grid;
  place-items: center;
`;
const StepButton = styled.button<{ $next?: boolean }>`
  width: 53px;
  height: 26px;
  margin-left: ${p => (p.$next ? 0 : 21)}px;
  display: grid;
  place-items: center;
  padding: ${p => (p.$next ? '0 0 0 2px' : '0 4px 0 0')};
  border: 1px solid #5a6470;
  border-radius: ${p => (p.$next ? '0 8px 8px 0' : '8px 0 0 8px')};
  background: linear-gradient(#e4e8ec, #cdd3da 45%, #a7aeb8 50%, #cfd8e0);
`;
const PlayButton = styled.button`
  position: relative;
  width: 48px;
  height: 48px;
  margin: 0 -5px;
  border-radius: 50%;
  border: 1px solid #a4a9b1;
  box-shadow: inset 0 0 0 3px #e4e7ea, inset 0 0 0 4px #45506e;
  background: radial-gradient(circle at 50% 92%, #3cd2ff, #1573dc 28%, transparent 50%), linear-gradient(#c5cbec, #7480cc 48%, #0c1a8c 52%, #1238b0);
  display: grid;
  place-items: center;
`;
const Separator = styled.span`
  width: 1px;
  height: 20px;
  margin-left: 12px;
  background: #a9aeb6;
`;
const Tooltip = styled.div`
  position: absolute;
  left: 241px;
  top: 22px;
  width: 301px;
  height: 35px;
  padding: 2px 5px;
  border: 1px solid #767676;
  background: #fff;
  box-shadow: 2px 2px 2px rgba(0, 0, 0, .4);
  font-family: "Noto Sans", "Open Sans", sans-serif;
  font-size: 11px;
  line-height: 15px;
  color: #575757;
`;

const MinMark = ({ color = '#111' }: { color?: string }) => <svg width="10" height="10" viewBox="0 0 10 10"><path d="M1 8h8" stroke={color} strokeWidth="2" /></svg>;
const CloseMark = ({ size = 9 }: IconProps) => <svg width={size} height={size} viewBox="0 0 9 9"><path d="m1 1 7 7m0-7L1 8" stroke="#fff" strokeWidth="1.800" /></svg>;
const RestoreMark = () => <svg width="11" height="11" viewBox="0 0 11 11" fill="none" stroke="#111"><path d="M1 3.500h7v6H1zM3 3V1h7.500v7H9" /><path d="M1 3.500h7" strokeWidth="2" /></svg>;

const stats: [string, string][] = [['High :', '0.6764'], ['Low :', '0.6716'], ['D1 :', '48'], ['Av :', '76'], ['Sprd :', '3.9'], ['S.Lvl :', '0'], ['Time :', '41:27']];

const DropItem = ({ label }: { label: string }) => (
  <MenuItem>{label}<CaretDown color="#1e395b" size={8} /></MenuItem>
);

export default function App() {
  return (
    <Page>
      <GlobalStyle />
      <TitleBar>
        <TitleIcon><PhotoIcon size={17} /></TitleIcon>
        <Title>Новый точечный рисунок (2) - Средство просмотра фотографий Windows</Title>
        <WindowButtons>
          <WindowButton aria-label="Свернуть"><MinMark /></WindowButton>
          <WindowButton aria-label="Развернуть"><RestoreMark /></WindowButton>
          <WindowButton $close aria-label="Закрыть"><CloseMark /></WindowButton>
        </WindowButtons>
      </TitleBar>
      <MenuBar>
        <DropItem label="Файл" />
        <DropItem label="Печать" />
        <PlainMenuItem>Эл. почта</PlainMenuItem>
        <DropItem label="Запись" />
        <DropItem label="Открыть" />
        <HelpButton>?</HelpButton>
      </MenuBar>

      <Viewer>
        <Photo>
          <Wood id="grain-photo" />
          <Terminal>
            <TerminalTitle>
              <span><MtIcon size={12} /></span>
              <span>159947: Weltrade-Live - [NZDUSD,H1]</span>
              <TerminalButtons>
                <TerminalButton aria-label="Свернуть"><MinMark /></TerminalButton>
                <TerminalButton aria-label="Развернуть"><svg width="9" height="8"><path d="M.5.500h8v7h-8zM.5 1.500h8" fill="none" stroke="#222" /></svg></TerminalButton>
                <TerminalButton $close aria-label="Закрыть"><CloseMark size={7} /></TerminalButton>
              </TerminalButtons>
            </TerminalTitle>
            <TerminalMenu>
              <Glyph name="charts" />
              <FirstMenuItem>Файл</FirstMenuItem>
              {['Вид', 'Вставка', 'Графики', 'Сервис', 'Окно', 'Справка'].map(m => <MenuItem key={m}>{m}</MenuItem>)}
              <MdiButtons>
                <MdiButton aria-label="Свернуть график"><svg width="8" height="8"><path d="M2 6.500h5" stroke="#456" /></svg></MdiButton>
                <MdiButton aria-label="Восстановить график"><svg width="8" height="8" fill="none" stroke="#456"><path d="M.5 3.500h4v3h-4zM2.500 3V1.500h5v3H5" /></svg></MdiButton>
                <MdiButton aria-label="Закрыть график"><svg width="8" height="8"><path d="m1.500 1.500 5 5m0-5-5 5" stroke="#345" strokeWidth="1.500" /></svg></MdiButton>
              </MdiButtons>
            </TerminalMenu>
            <ToolRow>
              <ToolGroup>
                <Grip />
                <Tool $w={31}><Glyph name="chartNew" /><CaretDown /></Tool>
                <Tool $w={28}><Glyph name="profiles" /><CaretDown /></Tool>
                <Divider />
                {['market', 'cross', 'favorites', 'terminal', 'tester'].map(n => <Tool key={n} $w={22}><Glyph name={n} /></Tool>)}
                <Divider />
                <Tool $w={83}><Glyph name="order" />Новый ордер</Tool>
                <Tool $w={24}><Glyph name="gold" /></Tool>
                <Tool $w={89} $on><Glyph name="auto" />Авто-торговля</Tool>
              </ToolGroup>
              <ToolGroup>
                <Grip />
                <Tool $on><Glyph name="bars" /></Tool>
                <Tool><Glyph name="candle" /></Tool>
                <Tool><Glyph name="line" /></Tool>
                <Divider />
                <Tool><Glyph name="zoomIn" /></Tool>
                <Tool><Glyph name="zoomOut" /></Tool>
                <Tool><Glyph name="tile" /></Tool>
                <Divider />
                <Tool $on><Glyph name="scroll" /></Tool>
                <Tool $on><Glyph name="shift" /></Tool>
                <Divider />
                <Tool $w={30}><Glyph name="indicator" /><CaretDown /></Tool>
                <Tool $w={30}><Glyph name="clock" /><CaretDown /></Tool>
                <Tool $w={29}><Glyph name="template" /><CaretDown /></Tool>
              </ToolGroup>
              <SearchBox>
                <input aria-label="Поиск" />
                <svg width="14" height="14" viewBox="0 0 14 14"><circle cx="8" cy="5" r="3.500" fill="none" stroke="#2a52a0" strokeWidth="1.500" /><path d="M5.500 8 1 13" stroke="#2a52a0" strokeWidth="2.500" /></svg>
                <ChatBadge><svg width="14" height="13" viewBox="0 0 14 13"><path d="M1 1h12v9H7l-3 3v-3H1z" fill="#3c5488" /><path d="M9 3H6v2h2q1 0 1 1.300T6 8" stroke="#fff" fill="none" /></svg></ChatBadge>
              </SearchBox>
            </ToolRow>
            <ToolRow>
              <ToolGroup>
                <Grip />
                <Tool $w={20} $on><Glyph name="pointer" /></Tool>
                <Tool $w={24}><Glyph name="plus" /></Tool>
                <Divider />
                {['vline', 'hline', 'trend', 'channel', 'fibo', 'textA', 'textT'].map(n => <Tool key={n}><Glyph name={n} /></Tool>)}
                <Tool $w={32}><Glyph name="arrows" /><CaretDown /></Tool>
              </ToolGroup>
              <ToolGroup>
                <Grip />
                {['M1', 'M5', 'M15', 'M30', 'H1', 'H4', 'D1', 'W1', 'MN'].map(t => <Period key={t} $on={t === 'H1'}>{t}</Period>)}
              </ToolGroup>
            </ToolRow>
            <ChartArea>
              <CandleChart />
              <Sentiment>
                <SentimentTable>
                  <colgroup><col width="58" /><col width="146" /><col width="145" /><col width="134" /><col width="102" /><col width="96" /></colgroup>
                  <thead><tr><th>Symbol</th><th>Shorts vs Longs</th><th>Volume (Short/Long)</th><th>Positions (Short/Long)</th><th>Avg. Short Price</th><th>Avg. Long Price</th></tr></thead>
                  <tbody><tr><td>NZDUSD</td><td><Ratio><span>45%</span></Ratio></td><td>522.90 /  <b>429.82</b></td><td>2839 /  <b>2286</b></td><td>0.6654</td><td>0.6854</td></tr></tbody>
                </SentimentTable>
                <Credit>© Forex21.com - The Best Forex Trading Systems | Data by MyFxBook.com</Credit>
              </Sentiment>
              <TopLine />
              <Insider>
                <InsiderName>Forex Insider 1.0.1
                  <svg width="10" height="10" viewBox="0 0 10 10" fill="none" stroke="#fff"><circle cx="5" cy="5" r="4.200" /><path d="M2.500 5.500q2.500 3 5 0M3.500 3v1M6.500 3v1" /></svg>
                </InsiderName>
                <InsiderPrice>0.6757</InsiderPrice>
                <InsiderTable><tbody>
                  {stats.map(([k, v]) => <tr key={k} className={k === 'Av :' ? 'alarm' : undefined}><th>{k}</th><td>{v}</td></tr>)}
                </tbody></InsiderTable>
                <InsiderSymbol>NZDUSD</InsiderSymbol>
                <InsiderFrame>H1</InsiderFrame>
              </Insider>
            </ChartArea>
            <Tabs>
              <Tab>AUDUSD,H1</Tab><Tab $last>USDJPY,H1</Tab><Tab $active>NZDUSD,H1</Tab>
              <TabScroll><span>◀</span><span>▶</span></TabScroll>
            </Tabs>
            <Status>
              <span>Для справки, нажмите F1</span>
              <QuoteCell $w={345}>63</QuoteCell>
              <StatusCell $w={56}>C: 0.66758</StatusCell>
              <StatusCell $w={53}>V: 981</StatusCell>
              <StatusCell $w={119}>
                <svg width="18" height="10" viewBox="0 0 18 10"><path d="M0 0h2v10H0zM3 0h2v10H3zM6 0h2v10H6zM9 0h2v10H9zM12 0h2v10h-2zM15 0h2v10h-2z" fill="#8b9b1e" /><path d="M0 9 18 5v5H0z" fill="#1d5566" /></svg>
                124/1 kb
              </StatusCell>
            </Status>
          </Terminal>

          <Toast>
            <b>Обнаружена вредоносная программа</b>
            Защитник Windows выполняет очистку<br />обнаруженной вредоносной программы.
            <ToastIcon width="21" height="18" viewBox="0 0 21 18" stroke="#888" strokeWidth=".8">
              <path d="M0 0h21v12l-2 6-5-3H3L0 12z" fill="#d4d4d4" /><path d="M0 4h21M0 8h21M0 12h20M6 0v4M14 0v4M3 4v4M10 4v4M17 4v4M6 8v4M14 8v4M10 12v3" />
            </ToastIcon>
          </Toast>

          <Alert>
            <AlertTitle>
              <AlertIcon><BellIcon /></AlertIcon>
              <span>Алерт</span>
              <AlertButtons>?<AlertClose aria-label="Закрыть"><CloseMark size={8} /></AlertClose></AlertButtons>
            </AlertTitle>
            <AlertBody><BellIcon size={32} />Dark Cloud on: USDJPY , 60 minutes chart</AlertBody>
          </Alert>

          <InnerBar>
            <StartButton $small aria-label="Пуск"><WinLogo size={22} /></StartButton>
            <TaskButton $small aria-label="Проводник"><FolderIcon size={26} /></TaskButton>
            <TaskButton $small $state="open" aria-label="Amigo"><AIcon size={26} /></TaskButton>
            <TaskButton $small aria-label="Skype"><SkypeIcon size={26} /></TaskButton>
            <TaskButton $small aria-label="ZX"><ZxIcon size={26} /></TaskButton>
            <TaskButton $small aria-label="Почта"><MailIcon size={26} /></TaskButton>
            <TaskButton $small $state="active" aria-label="MetaTrader"><MtIcon size={22} /></TaskButton>
            <Tray $small>
              <CaretUp /><WinLogo size={12} /><FlagIcon size={13} /><PowerIcon size={13} /><SignalIcon size={13} /><SoundIcon size={13} />
              <Language $small>РУС</Language>
              <Clock $small>19:18<br />29.03.2016</Clock>
              <Weather $small><StormIcon /></Weather>
              <ShowDesktop $small aria-label="Рабочий стол" />
            </Tray>
          </InnerBar>
        </Photo>
      </Viewer>

      <Controls>
        <Pill>
          <ControlButton aria-label="По размеру окна">
            <svg width="18" height="17" viewBox="0 0 18 17" fill="#0b50c0"><path d="M5.500 5.500h7v6h-7z" fill="none" stroke="#0b50c0" strokeWidth="2" /><path d="M9 4 6 1h6zM9 13l-3 3h6zM3.500 8.500 0 5.500v6zM14.500 8.500l3.500-3v6z" /></svg>
          </ControlButton>
          <StepButton aria-label="Назад"><svg width="16" height="12" viewBox="0 0 16 12" fill="#0d45bd"><path d="M1 0h3v12H1zM15 0v12L5 6z" /></svg></StepButton>
          <PlayButton aria-label="Показ слайдов">
            <svg width="22" height="19" viewBox="0 0 22 19"><rect x="0" y="0" width="22" height="19" rx="2" fill="#f2f2f2" /><path d="M3 4h16v11H3z" fill="#8cc4ea" /><path d="M3 10q8-1 16 3v2H3z" fill="#35794c" /><path d="M3 12q7 0 10 3H3z" fill="#2b7fb2" /></svg>
          </PlayButton>
          <StepButton $next aria-label="Вперед"><svg width="16" height="12" viewBox="0 0 16 12" fill="#0d45bd"><path d="M12 0h3v12h-3zM1 0v12l10-6z" /></svg></StepButton>
          <ControlButton $gap={14} aria-label="Повернуть влево">
            <svg width="16" height="18" viewBox="0 0 16 18"><path d="M5 4.500h3a5 5 0 1 1-5 8" fill="none" stroke="#1a4cb8" strokeWidth="3" /><path d="M7 0v9L1 4.500z" fill="#1a6ad0" /></svg>
          </ControlButton>
          <ControlButton $gap={9} aria-label="Повернуть вправо">
            <svg width="16" height="18" viewBox="0 0 16 18"><path d="M11 4.500H8a5 5 0 1 0 5 8" fill="none" stroke="#1a4cb8" strokeWidth="3" /><path d="M9 0v9l6-4.500z" fill="#1a6ad0" /></svg>
          </ControlButton>
          <Separator />
          <ControlButton $gap={9} aria-label="Удалить">
            <svg width="16" height="16" viewBox="0 0 16 16"><path d="m1 1 13 14M14 1Q7 6 1 15" stroke="#c4201c" strokeWidth="2.300" fill="none" /></svg>
          </ControlButton>
        </Pill>
        <Tooltip role="tooltip">Новый точечный рисунок (2) - Средство просмотра фотографий Windows</Tooltip>
      </Controls>

      <TaskBar>
        <Wood id="grain-bar" />
        <StartButton aria-label="Пуск"><WinLogo size={26} /></StartButton>
        <TaskButton $state="open" aria-label="Проводник"><FolderIcon /></TaskButton>
        <TaskButton $state="open" aria-label="Amigo"><AIcon /></TaskButton>
        <TaskButton aria-label="Skype"><SkypeIcon /></TaskButton>
        <TaskButton aria-label="ZX"><ZxIcon /></TaskButton>
        <TaskButton aria-label="Почта"><MailIcon /></TaskButton>
        <PhotoTask $state="active" aria-label="Просмотр фотографий"><PhotoIcon /></PhotoTask>
        <TaskButton $state="open" aria-label="Paint"><PaintIcon /></TaskButton>
        <TaskButton $state="open" aria-label="MetaTrader"><MtIcon /></TaskButton>
        <Tray>
          <CaretUp /><WinLogo size={15} /><FlagIcon /><PowerIcon /><SignalIcon /><SoundIcon />
          <Language>ENG</Language>
          <Clock>1:57<br />30.03.2016</Clock>
          <Weather><CloudIcon /></Weather>
          <ShowDesktop aria-label="Рабочий стол" />
        </Tray>
        <Watermark width="140" height="40" viewBox="0 0 140 40" fill="none" stroke="#cbbab2" opacity=".4" aria-hidden="true">
          <circle cx="43" cy="2" r="19" strokeWidth="2" /><path d="m32-5 6 17 5-12 5 12 6-17" strokeWidth="3" /><path d="M5 4 26 29 44 22" strokeWidth="7" />
        </Watermark>
      </TaskBar>
    </Page>
  );
}
